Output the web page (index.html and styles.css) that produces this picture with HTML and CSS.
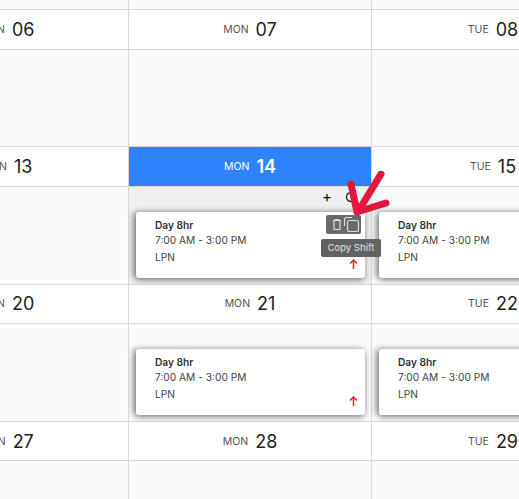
FILE: index.html
```html
<!DOCTYPE html>
<html lang="en">
<head>
    <meta charset="UTF-8">
    <meta name="viewport" content="width=device-width, initial-scale=1.0">
    <title>Schedule</title>
    <link rel="stylesheet" href="styles.css">
</head>
<body>

    <div class="calendario">
        <!-- Resto de la semana anterior -->
        <div class="cuerpo corte"></div>
        <div class="cuerpo corte"></div>
        <div class="cuerpo corte"></div>

        <!-- Semana 06 -->
        <div class="cabecera"><span class="dia">MON</span><span class="num">06</span></div>
        <div class="cabecera"><span class="dia">MON</span><span class="num">07</span></div>
        <div class="cabecera"><span class="dia">TUE</span><span class="num">08</span></div>
        <div class="cuerpo"></div>
        <div class="cuerpo"></div>
        <div class="cuerpo"></div>

        <!-- Semana 13 -->
        <div class="cabecera"><span class="dia">MON</span><span class="num">13</span></div>
        <div class="cabecera activa"><span class="dia">MON</span><span class="num">14</span></div>
        <div class="cabecera"><span class="dia">TUE</span><span class="num">15</span></div>
        <div class="cuerpo"></div>
        <div class="cuerpo seleccionado">
            <div class="herramientas">
                <span class="mas">+</span>
                <svg class="lupa" width="14" height="14" viewBox="0 0 14 14"><circle cx="6" cy="6" r="4.5"/><path d="M9.5 9.5l3 3"/></svg>
            </div>
            <div class="turno">
                <strong>Day 8hr</strong>
                <span>7:00 AM - 3:00 PM</span>
                <span class="rol">LPN</span>
                <div class="acciones">
                    <svg width="8" height="11" viewBox="0 0 8 11"><path d="M0 1.500h8M2.500 1.500V0.500h3v1M1 1.500h6v8.500a0.500 0.500 0 0 1-0.500 0.500h-5a0.500 0.500 0 0 1-0.500-0.500z"/></svg>
                    <svg width="15" height="15" viewBox="0 0 15 15"><path d="M8 0.500H2.500A2 2 0 0 0 0.500 2.500v6.500"/><rect x="3.500" y="3.500" width="11" height="11" rx="2"/></svg>
                </div>
                <div class="aviso">Copy Shift</div>
                <svg class="flecha" width="9" height="10" viewBox="0 0 9 10"><path d="M4.500 10V1M1 4.500L4.500 1 8 4.500"/></svg>
            </div>
        </div>
        <div class="cuerpo">
            <div class="turno">
                <strong>Day 8hr</strong>
                <span>7:00 AM - 3:00 PM</span>
                <span class="rol">LPN</span>
            </div>
        </div>

        <!-- Semana 20 -->
        <div class="cabecera"><span class="dia">MON</span><span class="num">20</span></div>
        <div class="cabecera"><span class="dia">MON</span><span class="num">21</span></div>
        <div class="cabecera"><span class="dia">TUE</span><span class="num">22</span></div>
        <div class="cuerpo"></div>
        <div class="cuerpo">
            <div class="turno">
                <strong>Day 8hr</strong>
                <span>7:00 AM - 3:00 PM</span>
                <span class="rol">LPN</span>
                <svg class="flecha" width="9" height="10" viewBox="0 0 9 10"><path d="M4.500 10V1M1 4.500L4.500 1 8 4.500"/></svg>
            </div>
        </div>
        <div class="cuerpo">
            <div class="turno">
                <strong>Day 8hr</strong>
                <span>7:00 AM - 3:00 PM</span>
                <span class="rol">LPN</span>
            </div>
        </div>

        <!-- Semana 27 -->
        <div class="cabecera"><span class="dia">MON</span><span class="num">27</span></div>
        <div class="cabecera"><span class="dia">MON</span><span class="num">28</span></div>
        <div class="cabecera"><span class="dia">TUE</span><span class="num">29</span></div>
        <div class="cuerpo"></div>
        <div class="cuerpo"></div>
        <div class="cuerpo"></div>
    </div>

    <!-- Marca roja de la captura -->
    <svg class="marca" width="50" height="50" viewBox="0 0 50 50">
        <path d="M38 3L16 39"/>
        <path d="M8 13L14 41L43 32"/>
    </svg>

</body>
</html>
```

FILE: styles.css
```css
html, body { margin: 0; height: 100%; overflow: hidden; background-color: #fafafa; }
body { font-family: "Inter", sans-serif; color: #2b2b2b; position: relative; }

.calendario { display: grid; grid-template-columns: repeat(3, 243px); grid-auto-rows: min-content; margin-left: -114px; width: 729px; }

.cabecera { height: 38.600px; display: flex; align-items: center; justify-content: center; gap: 7px; background-color: #fff; border-top: 1px solid #d8d8d8; border-right: 1px solid #d8d8d8; width: 242px; }
.dia { font-size: 10.500px; color: #555; }
.num { font-size: 18px; font-weight: 400; color: #222; }
.activa { background-color: #2e82fb; }
.activa .dia { color: #fff; }
.activa .num { color: #fff; font-weight: 600; }

.cuerpo { height: 71.700px; padding-top: 25px; border-top: 1px solid #d8d8d8; border-right: 1px solid #d8d8d8; background-color: #fafafa; position: relative; width: 242px; }
.corte { height: 8.950px; padding-top: 0; border-top: none; }
.seleccionado { background-color: #efefef; }

.herramientas { position: absolute; top: 3px; left: 0; right: 0; height: 14px; }
.mas { position: absolute; left: 193px; top: 0; font-size: 15px; font-weight: 400; line-height: 14px; color: #111; }
.lupa { position: absolute; left: 216px; top: 1px; fill: none; stroke: #222; stroke-width: 1.300; }

.turno { position: relative; box-sizing: border-box; width: 229px; height: 66px; margin-left: 7px; padding: 6px 0 0 19px; background-color: #fff; border-radius: 3px; box-shadow: 0 2px 6px rgba(0, 0, 0, 0.35), -3px 0 6px rgba(0, 0, 0, 0.35); display: flex; flex-direction: column; font-size: 10.200px; color: #444; }
.turno strong { font-weight: 600; color: #333; line-height: 15px; }
.turno span { line-height: 15px; }
.turno .rol { margin-top: 2px; }

.acciones { position: absolute; left: 190px; top: 3px; box-sizing: border-box; width: 35px; height: 19px; padding-left: 7px; background-color: #6a6a6a; border-radius: 2px; display: flex; align-items: center; gap: 3px; }
.acciones svg { fill: none; stroke: #ddd; stroke-width: 1.200; }
.aviso { position: absolute; left: 185px; top: 27px; width: 60px; height: 18px; background-color: #616161; border-radius: 2px; color: #d4d4d4; font-size: 9.500px; font-weight: 500; line-height: 18px; text-align: center; z-index: 2; }
.flecha { position: absolute; left: 213px; top: 47px; fill: none; stroke: #e0202f; stroke-width: 1.500; }

.marca { position: absolute; left: 343px; top: 171px; fill: none; stroke: #e3173a; stroke-width: 7; stroke-linecap: round; stroke-linejoin: round; z-index: 3; }
```
